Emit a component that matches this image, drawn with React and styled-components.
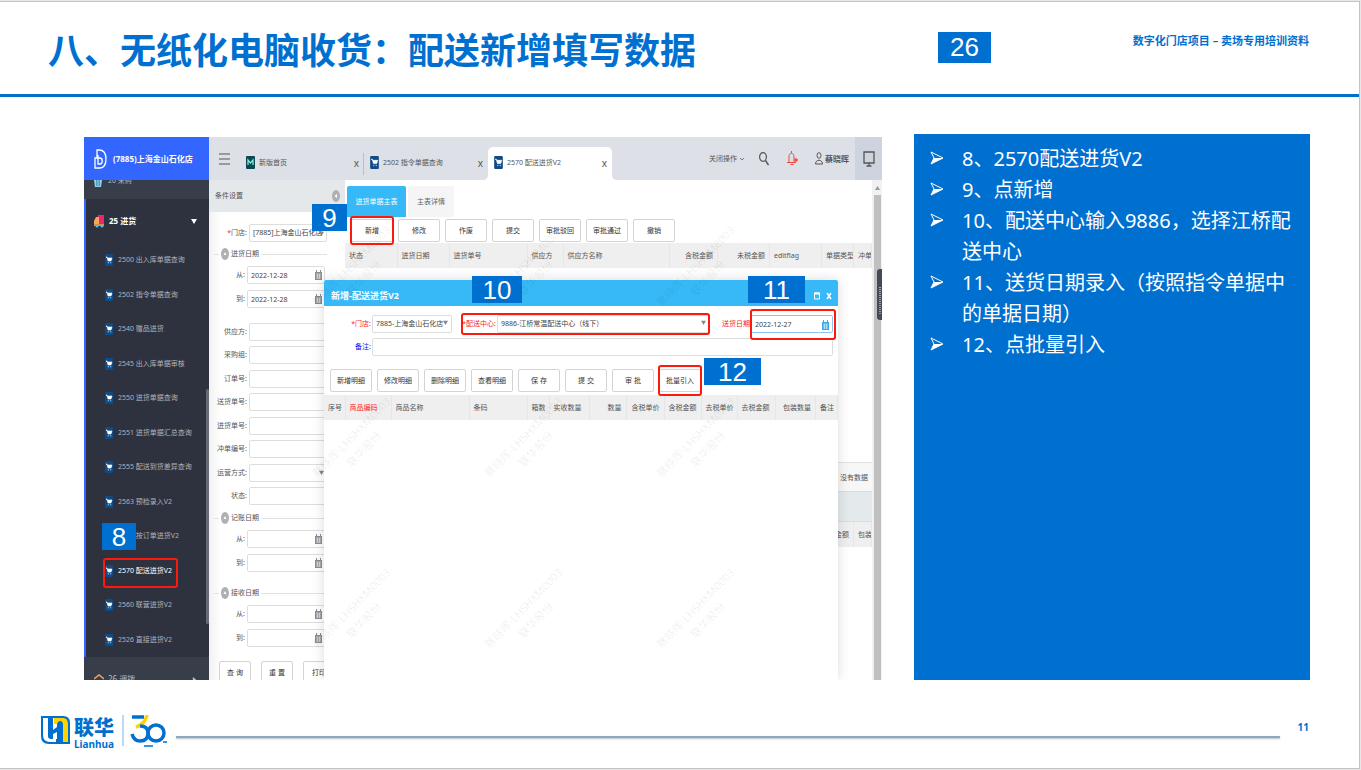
import React from "react";
import styled, { createGlobalStyle, css } from "styled-components";

const GlobalStyle = createGlobalStyle`
  * {
    box-sizing: border-box;
  }
  body {
    margin: 0;
    background: #e8e8e8;
    font-family: "Noto Sans", "Noto Sans CJK SC", sans-serif;
  }
  button, input, select {
    font: inherit;
    color: inherit;
    margin: 0;
  }
`;

const BLUE = "#0070d0";

// Slide
const Slide = styled.div`
  display: flex;
  flex-direction: column;
  min-height: calc(100vh - 3px);
  margin: 1px 1px 2px 0;
  background: #fff;
  border: 1px solid #c3c3c3;
  border-left: none;
`;

const Header = styled.header`
  display: grid;
  grid-template-columns: minmax(0, 890fr) 53px minmax(0, 318fr);
  align-items: start;
  height: 95px;
  padding: 24px 50px 0 48px;
  border-bottom: 3px solid ${BLUE};
`;

const Title = styled.h1`
  margin: 0;
  color: ${BLUE};
  font-size: 36px;
  line-height: 50px;
  font-weight: 700;
  white-space: nowrap;
`;

const PageBadge = styled.div`
  height: 31px;
  margin-top: 6px;
  background: ${BLUE};
  color: #fff;
  font-family: "Liberation Sans", sans-serif;
  font-size: 26px;
  line-height: 31px;
  text-align: center;
`;

const Subtitle = styled.div`
  margin-top: 6px;
  color: ${BLUE};
  font-size: 11px;
  line-height: 18px;
  font-weight: 700;
  text-align: right;
`;

const Main = styled.main`
  display: grid;
  grid-template-columns: minmax(0, 798fr) minmax(0, 396fr);
  gap: 32px;
  padding: 37px 49px 0 84px;
`;

const Steps = styled.ul`
  margin: 0;
  padding: 9px 16px 16px 16px;
  list-style: none;
  background: ${BLUE};
  color: #fff;
  font-size: 20px;
  line-height: 31px;
`;

const Step = styled.li`
  display: grid;
  grid-template-columns: 32px 1fr;

  svg {
    margin-top: 8px;
  }
`;

const Footer = styled.footer`
  display: flex;
  align-items: flex-start;
  padding: 35px 50px 20px 41px;
  color: ${BLUE};
`;

const FooterLine = styled.div`
  flex: 1;
  height: 2px;
  margin: 21px 18px 0 8px;
  background: #8ca9c4;
  box-shadow: 0 1px 2px #bbb;
`;

const PageNumber = styled.div`
  font-size: 10px;
  line-height: 24px;
  font-weight: 700;
`;

const Brand = styled.div`
  display: flex;
  flex-direction: column;
  width: 42px;
  margin: 0 6px 0 4px;
  font-weight: 700;

  b {
    font-size: 20px;
    line-height: 25px;
  }
  span {
    font-size: 10px;
    line-height: 8px;
  }
`;

// Embedded system window
const Frame = styled.section`
  position: relative;
  display: flex;
  height: 543px;
  margin-top: 3px;
  background: #fff;
  color: #555;
  font-size: 7px;
  line-height: 12px;
`;

const Sidebar = styled.nav`
  position: relative;
  display: flex;
  flex-direction: column;
  flex: none;
  width: 125px;
  overflow: hidden;
  background: #383d4a;
  color: #b9bcc4;
`;

const StoreName = styled.div`
  display: flex;
  align-items: center;
  gap: 6px;
  flex: none;
  height: 43px;
  padding-left: 10px;
  background: #3366ff;
  color: #fff;
  font-size: 8px;
  font-weight: 700;
  white-space: nowrap;
`;

const MenuPeek = styled.div`
  display: flex;
  align-items: flex-start;
  gap: 6px;
  flex: none;
  height: 19px;
  padding-left: 10px;
  line-height: 1px;
  overflow: hidden;
`;

const OpenGroup = styled.div`
  display: flex;
  flex-direction: column;
  flex: none;
  height: 458px;
  background: #2e323f;
  border-left: 2px solid #3366ff;
`;

const GroupButton = styled.button`
  display: flex;
  align-items: center;
  gap: 4px;
  flex: none;
  width: 100%;
  height: 44px;
  padding: 0 12px 0 ${(p) => p.$left}px;
  border: none;
  background: none;
  color: ${(p) => (p.$open ? "#fff" : "#b9bcc4")};
  font-size: 8px;
  font-weight: ${(p) => (p.$open ? 700 : 400)};

  svg:last-child {
    margin-left: auto;
  }
`;

const MenuList = styled.ul`
  display: flex;
  flex-direction: column;
  flex: 1;
  margin: 0;
  padding: 0;
  list-style: none;
`;

const MenuItem = styled.li`
  position: relative;
  display: flex;
  flex: 1;
  align-items: center;
  padding-left: 19px;
`;

const MenuLink = styled.a`
  display: flex;
  align-items: center;
  gap: 5px;
  color: ${(p) => (p.$active ? "#fff" : "#b0b3bb")};
  text-decoration: none;
  white-space: nowrap;
`;

const MenuThumb = styled.div`
  position: absolute;
  right: 0;
  top: 252px;
  width: 3px;
  height: 235px;
  background: #656a75;
  border-radius: 2px;
`;

const Ring = styled.div`
  position: absolute;
  z-index: 1;
  inset: ${(p) => p.$inset};
  border: 2px solid #fb1a0d;
  border-radius: 3px;
  pointer-events: none;
`;

const StepBadge = styled.div`
  position: absolute;
  z-index: 3;
  left: ${(p) => p.$x}px;
  top: ${(p) => p.$y}px;
  width: ${(p) => p.$w}px;
  height: 27px;
  background: ${BLUE};
  color: #fff;
  font-family: "Liberation Sans", sans-serif;
  font-size: 26px;
  font-weight: 400;
  line-height: 28px;
  text-align: center;
`;

const Workspace = styled.div`
  display: flex;
  flex-direction: column;
  flex: 1;
  min-width: 0;
`;

const TopBar = styled.div`
  display: flex;
  align-items: flex-end;
  flex: none;
  height: 43px;
  background: #dde0e6;
`;

const IconButton = styled.button`
  display: flex;
  align-items: center;
  justify-content: center;
  width: ${(p) => p.$w}px;
  height: 43px;
  padding: 0;
  border: none;
  background: ${(p) => (p.$shaded ? "#ced4df" : "none")};
`;

const Tab = styled.div`
  position: relative;
  display: flex;
  align-items: center;
  gap: 4px;
  width: 124px;
  height: 33px;
  padding: 0 5px 2px 6px;
  white-space: nowrap;

  button {
    margin-left: auto;
    padding: 0;
    border: none;
    background: none;
    font-size: 10px;
  }
  ${(p) =>
    p.$divider &&
    css`
      &::after {
        content: "";
        position: absolute;
        right: 0;
        top: 6px;
        height: 22px;
        border-right: 1px solid #bbbec4;
      }
    `}
  ${(p) =>
    p.$active &&
    css`
      background: #fff;
      border-radius: 5px 5px 0 0;
      &::before,
      &::after {
        content: "";
        position: absolute;
        bottom: 0;
        width: 5px;
        height: 5px;
      }
      &::before {
        left: -5px;
        background: radial-gradient(circle at 0 0, transparent 5px, #fff 5px);
      }
      &::after {
        right: -5px;
        background: radial-gradient(circle at 100% 0, transparent 5px, #fff 5px);
      }
    `}
`;

const TopActions = styled.div`
  display: flex;
  align-items: center;
  height: 43px;
  margin-left: auto;
  white-space: nowrap;
`;

const UserName = styled.span`
  display: flex;
  align-items: center;
  gap: 2px;
  width: 40px;
  font-size: 8px;
  font-weight: 700;
`;

const CloseMenu = styled.button`
  display: flex;
  align-items: center;
  gap: 3px;
  padding: 0;
  border: none;
  background: none;
`;

const Columns = styled.div`
  display: flex;
  flex: 1;
  min-height: 0;
`;

const Filters = styled.form`
  flex: none;
  width: 136px;
  overflow: hidden;
  background: linear-gradient(to right, #f1f1f1, #fff 12px);
`;

const FilterHead = styled.div`
  display: flex;
  align-items: center;
  justify-content: space-between;
  height: 32px;
  margin-bottom: 12px;
  padding: 0 5px 0 6px;
  background: #e4e8eb;
`;

const FilterRow = styled.div`
  position: relative;
  display: grid;
  grid-template-columns: ${(p) => (p.$date ? 36 : 38)}px 1fr;
  gap: 2px;
  align-items: center;
  margin: 0 ${(p) => (p.$date ? 20 : 18)}px ${(p) => (p.$date ? 6 : 0)}px 0;

  label {
    text-align: right;
    white-space: nowrap;
  }
  i {
    color: #f22;
    font-style: normal;
  }
  svg {
    position: absolute;
    right: 3px;
  }
`;

const FilterStack = styled.div`
  display: grid;
  grid-auto-rows: 1fr;
  height: 188px;
  margin-top: 12px;
`;

const control = css`
  display: block;
  width: 100%;
  min-width: 0;
  height: 18px;
  padding: 0 3px;
  border: 1px solid ${(p) => (p.$focus ? "#8fc4f0" : "#ddd")};
  border-radius: 2px;
  background: #fff;
  color: #444;
`;

const Input = styled.input`
  ${control}
`;

const Select = styled.select`
  ${control}
  appearance: none;
`;

const Legend = styled.div`
  display: flex;
  align-items: center;
  gap: 2px;
  height: 20px;
  margin: ${(p) => p.$top}px 18px 2px 5px;

  &::before {
    content: "";
    width: 5px;
    border-top: 1px solid #e2e2e2;
  }
  &::after {
    content: "";
    flex: 1;
    border-top: 1px solid #e2e2e2;
  }
`;

const FilterButtons = styled.div`
  display: flex;
  gap: 10px;
  margin: 14px 0 0 10px;
`;

const Button = styled.button`
  position: relative;
  flex: none;
  width: ${(p) => p.$w || 42}px;
  height: 23px;
  padding: 0;
  border: 1px solid #d4d4d4;
  border-radius: 2px;
  background: #fff;
  color: #333;
  white-space: nowrap;
`;

const Content = styled.div`
  flex: 1;
  min-width: 0;
  padding-top: 6px;
`;

const ViewTabs = styled.div`
  display: flex;
  gap: 2px;
  height: 31px;
  margin-left: 2px;
`;

const ViewTab = styled.button`
  width: ${(p) => p.$w}px;
  padding: 0;
  border: none;
  border-radius: 2px 2px 0 0;
  background: ${(p) => (p.$active ? "#36b9f6" : "#f5f5f5")};
  color: ${(p) => (p.$active ? "#fff" : "#666")};
`;

const ButtonRow = styled.div`
  display: flex;
  gap: 5px;
  padding: ${(p) => p.$pad};
`;

const GridTable = styled.table`
  width: 100%;
  table-layout: fixed;
  border-collapse: collapse;
  background: #efefef;

  th {
    height: 25px;
    padding: 0 4px;
    border-right: 1px solid #e6e6e6;
    font-weight: 400;
    white-space: nowrap;
    overflow: hidden;
  }
`;

const Th = styled.th`
  width: ${(p) => (p.$w ? p.$w + "px" : "auto")};
  text-align: ${(p) => (p.$right ? "right" : "left")};
  ${(p) => p.$key && "color: #ff2222;"}
`;

const EmptyFoot = styled.div`
  height: 29px;
  margin-top: 194px;
  padding-right: 4px;
  border-top: 1px solid #e2e2e2;
  background: #f7f7f7;
  line-height: 30px;
  text-align: right;
`;

const Strip = styled.div`
  height: 31px;
  background: #e4e9ec;
  border: solid #dcdcdc;
  border-width: 1px 0;
`;

const ScrollTrack = styled.div`
  position: relative;
  display: flex;
  flex-direction: column;
  align-items: center;
  flex: none;
  width: 10px;
  padding-top: 6px;
  background: #f1f1f1;
`;

const ScrollThumb = styled.div`
  flex: 1;
  width: 7px;
  margin-top: 5px;
  background: #c0c0c0;
`;

const SideMeter = styled.div`
  position: absolute;
  right: 0;
  top: 89px;
  width: 5px;
  height: 51px;
  padding: 18px 1px 6px 2px;
  border-radius: 3px 0 0 3px;
  background: #454a58;

  &::after {
    content: "";
    display: block;
    height: 27px;
    background: repeating-linear-gradient(transparent 0 1px, #454a58 1px 2px),
      linear-gradient(#c9b145, #3fc39a);
  }
`;

const Dialog = styled.section`
  position: absolute;
  z-index: 1;
  left: 240px;
  right: 44px;
  top: 143px;
  bottom: 0;
  background: #fff;
  box-shadow: 0 0 12px rgba(0, 0, 0, 0.14);
  clip-path: inset(-12px -12px 0 -12px);
`;

const DialogTitle = styled.h2`
  position: relative;
  display: flex;
  align-items: center;
  height: 26px;
  margin: 0;
  padding: 5px 6px 0 7px;
  border-radius: 2px 2px 0 0;
  background: #36b9f6;
  color: #fff;
  font-size: 9px;
  font-weight: 700;

  button {
    display: flex;
    padding: 0;
    margin-left: 6px;
    border: none;
    background: none;
  }
  button:first-of-type {
    margin-left: auto;
  }
`;

const DialogForm = styled.div`
  display: grid;
  grid-template-columns: 48px 80px 45px 213px 41px 82px;
  row-gap: 5px;
  align-items: center;
  padding: 9px 0 0;
  white-space: nowrap;

  label {
    padding-right: 1px;
    text-align: right;
  }
`;

const RedLabel = styled.label`
  color: #fb1a1a;
`;

const NoteLabel = styled.label`
  color: #1414ff;
`;

const Field = styled.div`
  position: relative;
  grid-column: ${(p) => (p.$wide ? "2 / -1" : "auto")};

  > svg {
    position: absolute;
    right: 4px;
    top: 5px;
  }
`;

const WatermarkLayer = styled.div`
  position: absolute;
  z-index: 2;
  left: 187px;
  top: 49px;
  display: grid;
  grid-template-columns: repeat(3, 172px);
  grid-auto-rows: 171px;
  height: 494px;
  overflow: hidden;
  pointer-events: none;
`;

const Watermark = styled.div`
  display: flex;
  flex-direction: column;
  align-items: center;
  justify-content: center;
  color: rgba(0, 0, 0, 0.08);
  font-size: 11px;
  line-height: 17px;
  white-space: nowrap;
  transform: rotate(-46deg);
`;

// Icons
const Bullet = () => (
  <svg width="14" height="14" viewBox="0 0 14 14">
    <path d="M1 1 13 7 1 13 4 7Z" fill="none" stroke="#fff" />
    <path d="M4 7H13L1 13Z" fill="#fff" />
  </svg>
);

const CartIcon = ({ size = 8 }) => (
  <svg width={size} height={size + 4} viewBox="0 0 8 12">
    <rect width="8" height="12" rx="1" fill="#114b86" />
    <path d="M1 3h1l1 4h3l1-3H2.500z" fill="#fff" stroke="#fff" strokeWidth=".6" />
    <circle cx="3.300" cy="8.800" r=".7" fill="#6cc4ff" />
    <circle cx="5.700" cy="8.800" r=".7" fill="#6cc4ff" />
  </svg>
);

const HomeIcon = () => (
  <svg width="9" height="13" viewBox="0 0 9 13">
    <rect width="9" height="13" rx="1" fill="#0d4850" />
    <path d="M2 9V4l2.500 3L7 4v5" fill="none" stroke="#7fe6dc" strokeWidth="1.300" />
  </svg>
);

const StoreLogo = () => (
  <svg width="13" height="20" viewBox="0 0 13 20" fill="none" stroke="#fff" strokeWidth="1.300">
    <path d="M3 9V1h2c5 0 7 4 7 9s-2 9-6 9H1V9h5c3 0 3 6 0 6H4V6" />
  </svg>
);

const TruckIcon = () => (
  <svg width="11" height="14" viewBox="0 0 11 14">
    <path d="M4 1h6v9H4z" fill="#e8286b" />
    <path d="M0 11V7l2-4h3v8z" fill="#f7a45d" />
    <path d="M0 10h10v2H0z" fill="#e8854a" />
    <circle cx="3" cy="12" r="1.500" fill="#49c2e8" />
    <circle cx="8" cy="12" r="1.500" fill="#49c2e8" />
  </svg>
);

const BasketIcon = () => (
  <svg width="8" height="7" viewBox="0 0 8 7">
    <path d="M0 0h8L7 7H1z" fill="#8fd3f4" />
    <path d="M2.500 0v6M4 0v6M5.500 0v6" stroke="#38708e" strokeWidth=".6" />
  </svg>
);

const TransferIcon = () => (
  <svg width="10" height="12" viewBox="0 0 10 12" fill="none" stroke="#f0a35c" strokeWidth="1.500">
    <path d="M0 6l5-4 5 4M2 7v4h6V7" />
  </svg>
);

const Caret = ({ color = "#888", size = 5, right }) => (
  <svg width={size} height={size} viewBox="0 0 6 6">
    <path d={right ? "M1 0 5 3 1 6z" : "M0 1h6L3 6z"} fill={color} />
  </svg>
);

const Chevron = () => (
  <svg width="4" height="4" viewBox="0 0 4 4" fill="none" stroke="#777">
    <path d="M0 1l2 2 2-2" />
  </svg>
);

const CalendarIcon = ({ color = "#8c8c94" }) => (
  <svg width="7" height="10" viewBox="0 0 7 10">
    <path d="M0 2h1V0h1v2h3V0h1v2h1v8H0z" fill={color} />
    <path d="M1 4h5M1 6h5M1 8h5M2.500 4v5M4.500 4v5" stroke="#fff" strokeWidth=".5" />
  </svg>
);

const Knob = ({ left }) => (
  <svg width="8" height="12" viewBox="0 0 8 12">
    <ellipse cx="4" cy="6" rx="4" ry="6" fill="#b0b0b0" />
    <path d={left ? "M5 4v4L2.500 6z" : "M2.500 7h3L4 4z"} fill="#fff" />
  </svg>
);

const MenuIcon = () => (
  <svg width="11" height="12" viewBox="0 0 11 12" stroke="#555" strokeWidth="1.200">
    <path d="M0 1h11M0 6h11M0 11h11" />
  </svg>
);

const SearchIcon = () => (
  <svg width="10" height="14" viewBox="0 0 10 14" fill="none" stroke="#555">
    <ellipse cx="4" cy="5" rx="3.400" ry="4.300" strokeWidth="1.200" />
    <path d="M6.500 8.500 9.500 13" strokeWidth="1.500" />
  </svg>
);

const BellIcon = () => (
  <svg width="11" height="15" viewBox="0 0 11 15" fill="none" stroke="#f5463c">
    <path d="M4.500 0v2M2 11V6c0-5 5-5 5 0v5M0 11.500h9M3.500 13.500h3" />
    <circle cx="9" cy="9" r="1.800" fill="#f5463c" stroke="none" />
  </svg>
);

const UserIcon = () => (
  <svg width="8" height="13" viewBox="0 0 8 13" fill="none" stroke="#555">
    <ellipse cx="4" cy="3.500" rx="2" ry="2.800" />
    <path d="M.5 12c0-5 7-5 7 0z" />
  </svg>
);

const MonitorIcon = () => (
  <svg width="12" height="16" viewBox="0 0 12 16" fill="none" stroke="#555" strokeWidth="1.300">
    <path d="M1 1h10v11H1zM6 12v3M3.500 15h5" />
  </svg>
);

const BrandMark = () => (
  <svg width="29" height="30" viewBox="0 0 29 30">
    <path d="M0 1h22q7 0 7 7v21H8q-8 0-8-8z" fill={BLUE} />
    <path d="M2 3h5v18q0 3 3 3h5v3H9q-7 0-7-7z" fill="#fff" />
    <path d="M12 3h4v9l-4 3z" fill="#fff" />
    <path d="M13 3h9q5 0 5 6v18h-5V10q0-4-3-4-2 0-3 3h-3z" fill="#ffd200" />
    <path d="M12 19l4-2v7h-4z" fill="#fff" />
  </svg>
);

const AnniversaryMark = () => (
  <svg width="46" height="32" viewBox="0 0 46 32" fill="none" strokeWidth="3.500">
    <path d="M1 0v31" stroke="#a9cdf0" strokeWidth="1.500" />
    <path d="M10 2h12" stroke={BLUE} />
    <path d="M25 0q-2 9-11 12" stroke="#ffd200" />
    <path d="M18 11q8 0 8 7 0 8-8 8-6 0-8-7" stroke={BLUE} />
    <circle cx="34" cy="18" r="8" stroke={BLUE} />
    <path d="M22 31h9M41 27h4" stroke={BLUE} strokeWidth="1.500" />
  </svg>
);

const menuItems = [
  "2500 出入库单据查询",
  "2502 指令单据查询",
  "2540 赠品进货",
  "2545 出入库单据审核",
  "2550 进货单据查询",
  "2551 进货单据汇总查询",
  "2555 配送到货差异查询",
  "2563 预检录入V2",
  "2565 按订单进货V2",
  "2570 配送进货V2",
  "2560 联营进货V2",
  "2526 直接进货V2",
];

const filterFields = ["供应方", "采购组", "订单号", "送货单号", "进货单号", "冲单编号", "运营方式", "状态"];

const mainColumns = [
  { name: "状态", w: 52 },
  { name: "进货日期", w: 52 },
  { name: "进货单号", w: 78 },
  { name: "供应方", w: 36 },
  { name: "供应方名称" },
  { name: "含税金额", w: 48, right: true },
  { name: "未税金额", w: 52, right: true },
  { name: "editflag", w: 52 },
  { name: "单据类型", w: 32 },
  { name: "冲单编号", w: 18 },
];

const detailColumns = [
  { name: "序号", w: 21 },
  { name: "商品编码", w: 46, key: true },
  { name: "商品名称", w: 78 },
  { name: "条码", w: 58 },
  { name: "箱数", w: 22 },
  { name: "实收数量", w: 40 },
  { name: "数量", w: 37, right: true },
  { name: "含税单价", w: 38, right: true },
  { name: "含税金额", w: 37 },
  { name: "去税单价", w: 36, right: true },
  { name: "去税金额", w: 38 },
  { name: "包装数量", right: true },
  { name: "备注", w: 22 },
];

const steps = [
  "8、2570配送进货V2",
  "9、点新增",
  "10、配送中心输入9886，选择江桥配送中心",
  "11、送货日期录入（按照指令单据中的单据日期）",
  "12、点批量引入",
];

const HeadRow = ({ columns }) => (
  <GridTable>
    <thead>
      <tr>
        {columns.map((col) => (
          <Th key={col.name} $w={col.w} $right={col.right} $key={col.key}>
            {col.name}
          </Th>
        ))}
      </tr>
    </thead>
  </GridTable>
);

const DateRange = ({ title, id, top, value = "" }) => (
  <>
    <Legend $top={top}>
      <Knob />
      {title}
    </Legend>
    {["从", "到"].map((name) => (
      <FilterRow key={name} $date>
        <label htmlFor={id + name}>{name}:</label>
        <Input id={id + name} defaultValue={value} />
        <CalendarIcon />
      </FilterRow>
    ))}
  </>
);

const SideMenu = () => (
  <Sidebar>
    <StoreName>
      <StoreLogo />
      (7885)上海金山石化店
    </StoreName>
    <MenuPeek>
      <BasketIcon />
      20 采购
    </MenuPeek>
    <OpenGroup>
      <GroupButton $open $left={8}>
        <TruckIcon />
        25 进货
        <Caret color="#fff" size={6} />
      </GroupButton>
      <MenuList>
        {menuItems.map((item) => {
          const active = item.startsWith("2570");
          return (
            <MenuItem key={item}>
              <MenuLink href="#" $active={active}>
                <CartIcon />
                {item}
              </MenuLink>
              {active && <Ring $inset="4px 31px 0 17px" />}
              {item.startsWith("2565") && (
                <StepBadge $x={16} $y={4} $w={34}>
                  8
                </StepBadge>
              )}
            </MenuItem>
          );
        })}
      </MenuList>
    </OpenGroup>
    <GroupButton $left={10}>
      <TransferIcon />
      26 调拨
      <Caret color="#b9bcc4" right />
    </GroupButton>
    <MenuThumb />
  </Sidebar>
);

const FilterPanel = () => (
  <Filters>
    <FilterHead>
      条件设置
      <Knob left />
    </FilterHead>
    <FilterRow>
      <label htmlFor="store">
        <i>*</i>门店:
      </label>
      <Select id="store">
        <option>[7885]上海金山石化店</option>
      </Select>
      <Caret />
    </FilterRow>
    <DateRange title="进货日期" id="in" top={2} value="2022-12-28" />
    <FilterStack>
      {filterFields.map((name) => (
        <FilterRow key={name}>
          <label htmlFor={name}>{name}:</label>
          {name === "运营方式" ? <Select id={name} /> : <Input id={name} />}
          {name === "运营方式" && <Caret />}
        </FilterRow>
      ))}
    </FilterStack>
    <DateRange title="记账日期" id="book" top={0} />
    <DateRange title="接收日期" id="receive" top={11} />
    <FilterButtons>
      <Button type="button" $w={32}>查 询</Button>
      <Button type="button" $w={32}>重 置</Button>
      <Button type="button" $w={32}>打印</Button>
    </FilterButtons>
  </Filters>
);

const EntryDialog = () => (
  <Dialog>
    <DialogTitle>
      新增-配送进货V2
      <StepBadge $x={148} $y={-4} $w={50}>10</StepBadge>
      <StepBadge $x={424} $y={-4} $w={57}>11</StepBadge>
      <button aria-label="最大化">
        <svg width="6" height="8" viewBox="0 0 6 8">
          <path d="M.5 1v6h5V1z" fill="none" stroke="#fff" />
          <path d="M0 1.500h6" stroke="#fff" strokeWidth="2" />
        </svg>
      </button>
      <button aria-label="关闭">
        <svg width="6" height="8" viewBox="0 0 6 8">
          <path d="M1 1l4 6M5 1 1 7" stroke="#fff" strokeWidth="1.500" />
        </svg>
      </button>
    </DialogTitle>
    <DialogForm>
      <RedLabel htmlFor="d-store">*门店:</RedLabel>
      <Field>
        <Select id="d-store">
          <option>7885-上海金山石化店</option>
        </Select>
        <Caret />
      </Field>
      <RedLabel htmlFor="d-center">*配送中心:</RedLabel>
      <Field>
        <Select id="d-center">
          <option>9886-江桥常温配送中心（线下）</option>
        </Select>
        <Caret />
        <Ring $inset="-2px 0 -2px -36px" />
      </Field>
      <RedLabel htmlFor="d-date">送货日期</RedLabel>
      <Field>
        <Input id="d-date" defaultValue="2022-12-27" $focus />
        <CalendarIcon color="#36a9e6" />
        <Ring $inset="-6px -3px -7px -1px" />
      </Field>
      <NoteLabel htmlFor="d-note">备注:</NoteLabel>
      <Field $wide>
        <Input id="d-note" />
      </Field>
    </DialogForm>
    <ButtonRow $pad="13px 0 3px 6px">
      {["新增明细", "修改明细", "删除明细", "查看明细", "保 存", "提 交", "审 批"].map((name) => (
        <Button key={name}>{name}</Button>
      ))}
      <Button>
        批量引入
        <Ring $inset="-5px -2px" />
        <StepBadge $x={44} $y={-12} $w={57}>12</StepBadge>
      </Button>
    </ButtonRow>
    <HeadRow columns={detailColumns} />
  </Dialog>
);

const SystemWindow = () => (
  <Frame>
    <SideMenu />
    <Workspace>
      <TopBar>
        <IconButton $w={31} aria-label="菜单">
          <MenuIcon />
        </IconButton>
        <Tab $divider>
          <HomeIcon />
          新版首页
          <button>x</button>
        </Tab>
        <Tab>
          <CartIcon size={9} />
          2502 指令单据查询
          <button>x</button>
        </Tab>
        <Tab $active>
          <CartIcon size={9} />
          2570 配送进货V2
          <button>x</button>
        </Tab>
        <TopActions>
          <CloseMenu>
            关闭操作 <Chevron />
          </CloseMenu>
          <IconButton $w={40} aria-label="搜索">
            <SearchIcon />
          </IconButton>
          <IconButton $w={17} aria-label="通知">
            <BellIcon />
          </IconButton>
          <IconButton as="span" $w={14} />
          <UserName>
            <UserIcon />
            蔡晓晖
          </UserName>
          <IconButton $w={27} $shaded aria-label="屏幕">
            <MonitorIcon />
          </IconButton>
        </TopActions>
      </TopBar>
      <Columns>
        <FilterPanel />
        <Content>
          <ViewTabs>
            <ViewTab $w={59} $active>进货单据主表</ViewTab>
            <ViewTab $w={46}>主表详情</ViewTab>
          </ViewTabs>
          <ButtonRow $pad="2px 0 1px 6px">
            <Button>
              新增
              <Ring $inset="-4px -2px" />
              <StepBadge $x={-40} $y={-16} $w={35}>9</StepBadge>
            </Button>
            {["修改", "作废", "提交", "审批驳回", "审批通过", "撤销"].map((name) => (
              <Button key={name}>{name}</Button>
            ))}
          </ButtonRow>
          <HeadRow columns={mainColumns} />
          <EmptyFoot>没有数据</EmptyFoot>
          <Strip />
          <HeadRow
            columns={[
              { name: "去税金额", right: true },
              { name: "包装数量", w: 18 },
            ]}
          />
        </Content>
        <ScrollTrack>
          <svg width="5" height="4" viewBox="0 0 5 4">
            <path d="M0 4h5L2.500 0z" fill="#999" />
          </svg>
          <ScrollThumb />
          <SideMeter />
        </ScrollTrack>
      </Columns>
    </Workspace>
    <EntryDialog />
    <WatermarkLayer aria-hidden="true">
      {Array.from({ length: 9 }, (_, i) => (
        <Watermark key={i}>
          <span>蔡晓晖-LHSHXM0003</span>
          <span>联华股份</span>
        </Watermark>
      ))}
    </WatermarkLayer>
  </Frame>
);

const App = () => (
  <>
    <GlobalStyle />
    <Slide>
      <Header>
        <Title>八、无纸化电脑收货：配送新增填写数据</Title>
        <PageBadge>26</PageBadge>
        <Subtitle>数字化门店项目 – 卖场专用培训资料</Subtitle>
      </Header>
      <Main>
        <SystemWindow />
        <Steps>
          {steps.map((text) => (
            <Step key={text}>
              <Bullet />
              <span>{text}</span>
            </Step>
          ))}
        </Steps>
      </Main>
      <Footer>
        <BrandMark />
        <Brand>
          <b>联华</b>
          <span>Lianhua</span>
        </Brand>
        <AnniversaryMark />
        <FooterLine />
        <PageNumber>11</PageNumber>
      </Footer>
    </Slide>
  </>
);

export default App;
